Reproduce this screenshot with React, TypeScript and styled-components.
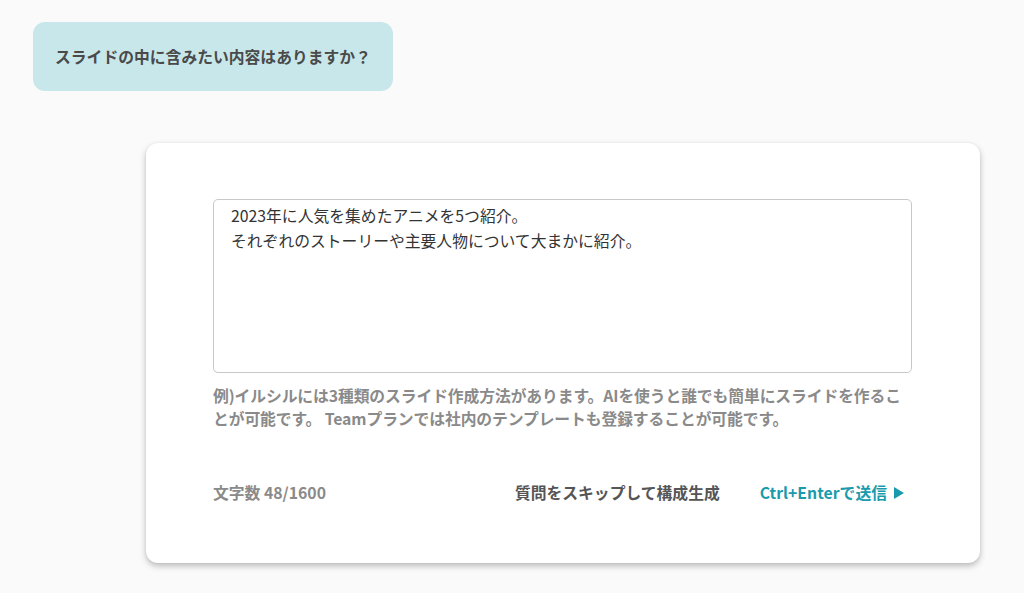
import styled, { createGlobalStyle } from 'styled-components';

const GlobalStyle = createGlobalStyle`
	html, body {
		margin: 0;
		padding: 0;
		background: #fafafa;
		font-family: "Noto Sans CJK JP", "Noto Sans", sans-serif;
	}
`;

const TEXT = '2023年に人気を集めたアニメを5つ紹介。\nそれぞれのストーリーや主要人物について大まかに紹介。';

export default function App() {
	return (
		<>
			<GlobalStyle />
			<Page>
				<Bubble>スライドの中に含みたい内容はありますか？</Bubble>
				<Card>
					<Input defaultValue={TEXT} />
					<Hint>
						例)イルシルには3種類のスライド作成方法があります。AIを使うと誰でも簡単にスライドを作ることが可能です。 Teamプランでは社内のテンプレートも登録することが可能です。
					</Hint>
					<Footer>
						<Count>文字数 48/1600</Count>
						<Actions>
							<SkipButton>質問をスキップして構成生成</SkipButton>
							<SendButton>
								Ctrl+Enterで送信
								<svg width="12" height="14" viewBox="0 0 12 14">
									<path d="M1 1 L11 7 L1 13 Z" fill="currentColor" />
								</svg>
							</SendButton>
						</Actions>
					</Footer>
				</Card>
			</Page>
		</>
	);
}

const Page = styled.div`
	padding: 22px 0 30px 33px;
	display: flex;
	flex-direction: column;
	align-items: flex-start;
`;

const Bubble = styled.div`
	box-sizing: border-box;
	width: 360px;
	height: 69px;
	background: #c7e7ea;
	border-radius: 12px;
	padding: 0 22px;
	display: flex;
	align-items: center;
	font-size: 15.8px;
	font-weight: 700;
	color: #4a4a4a;
`;

const Card = styled.div`
	box-sizing: border-box;
	margin: 52px 0 0 113px;
	width: 834px;
	height: 420px;
	background: #fff;
	border-radius: 12px;
	box-shadow: 0 3px 6px rgba(0, 0, 0, 0.25), 0 0 3px rgba(0, 0, 0, 0.05);
	padding: 56px 68px 0 67px;
`;

const Input = styled.textarea`
	box-sizing: border-box;
	display: block;
	width: 100%;
	height: 174px;
	border: 1px solid #c8c8c8;
	border-radius: 5px;
	padding: 3px 17px;
	resize: none;
	outline: none;
	font-family: "Noto Sans CJK JP", "Noto Sans", sans-serif;
	font-size: 15.8px;
	line-height: 25px;
	color: #333;
`;

const Hint = styled.p`
	margin: 11px 0 0;
	font-size: 15.8px;
	font-weight: 700;
	line-height: 23px;
	color: #8a8a8a;
	letter-spacing: -0.1px;
`;

const Footer = styled.div`
	margin-top: 53px;
	display: flex;
	justify-content: space-between;
	align-items: center;
	padding-right: 7px;
	font-size: 15.8px;
	font-weight: 700;
	line-height: 20px;
`;

const Count = styled.span`
	color: #8a8a8a;
`;

const Actions = styled.div`
	display: flex;
	align-items: center;
	gap: 40px;
`;

const SkipButton = styled.span`
	color: #555;
	cursor: pointer;
`;

const SendButton = styled.span`
	color: #1a9bad;
	display: flex;
	align-items: center;
	gap: 6px;
	cursor: pointer;
`;
